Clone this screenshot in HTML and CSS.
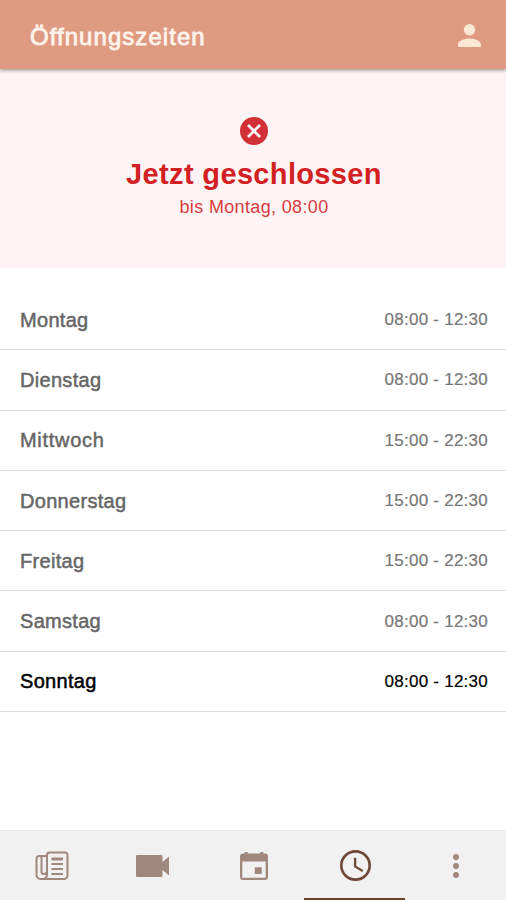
FILE: index.html
```html
<!DOCTYPE html>
<html lang="de">
<head>
<meta charset="utf-8">
<title>Öffnungszeiten</title>
<link rel="stylesheet" href="styles.css">
</head>
<body>
<header class="bar">
  <h1 class="bar-title">Öffnungszeiten</h1>
  <svg class="user" viewBox="4 4 16 16"><path d="M12 12a4 4 0 1 0 0-8 4 4 0 0 0 0 8zm0 2c-2.67 0-8 1.34-8 4v2h16v-2c0-2.66-5.33-4-8-4z"/></svg>
</header>
<section class="status">
  <svg class="status-icon" viewBox="2 2 20 20"><path d="M12 2a10 10 0 1 0 0 20 10 10 0 0 0 0-20zm5 13.59L15.59 17 12 13.41 8.41 17 7 15.59 10.59 12 7 8.41 8.41 7 12 10.59 15.59 7 17 8.41 13.41 12z"/></svg>
  <h2 class="status-title">Jetzt geschlossen</h2>
  <p class="status-text">bis Montag, 08:00</p>
</section>
<main class="hours">
  <div class="row"><span class="day">Montag</span><span class="time">08:00 - 12:30</span></div>
  <div class="row"><span class="day">Dienstag</span><span class="time">08:00 - 12:30</span></div>
  <div class="row"><span class="day wide">Mittwoch</span><span class="time">15:00 - 22:30</span></div>
  <div class="row"><span class="day">Donnerstag</span><span class="time">15:00 - 22:30</span></div>
  <div class="row"><span class="day">Freitag</span><span class="time">15:00 - 22:30</span></div>
  <div class="row"><span class="day">Samstag</span><span class="time">08:00 - 12:30</span></div>
  <div class="row today"><span class="day">Sonntag</span><span class="time">08:00 - 12:30</span></div>
</main>
<nav class="tabs">
  <a class="tab"><svg class="news" viewBox="0 0 34 30"><path class="line" d="M12 7V4a2.500 2.500 0 0 1 2.500-2.500H30A2.500 2.500 0 0 1 32.500 4v20.500a3.500 3.500 0 0 1-3.500 3.500H5.500A4 4 0 0 1 1.500 24V7.500A2.500 2.500 0 0 1 4 5h8v18.500a4.500 4.500 0 0 1-4 4.500M6.500 5.500V20a2.500 2.500 0 0 0 5 1"/><path d="M16.500 6.500h11.500v3H16.500zM16.500 12h11.500v2H16.500zM16.500 17h11.500v2H16.500zM16.500 22h11.500v2H16.500z"/></svg></a>
  <a class="tab"><svg class="video" viewBox="0 0 33 22"><path d="M1 0h24.500a1 1 0 0 1 1 1v6L33 1.500v19L26.500 15v6a1 1 0 0 1-1 1H1a1 1 0 0 1-1-1V1a1 1 0 0 1 1-1z"/></svg></a>
  <a class="tab"><svg class="calendar" viewBox="3 2 18 18.500" preserveAspectRatio="none"><path d="M17 12h-4.500v4.500H17zM16 2v1H8V2H6v1H5a2 2 0 0 0-2 2v13.500a2 2 0 0 0 2 2h14a2 2 0 0 0 2-2V5a2 2 0 0 0-2-2h-1V2zm3.500 17h-15V8.300h15z"/></svg></a>
  <a class="tab active"><svg class="clock" viewBox="2 2 20 20"><path d="M12 2a10 10 0 1 0 0 20 10 10 0 0 0 0-20zm0 18.300a8.300 8.300 0 1 1 0-16.600 8.300 8.300 0 0 1 0 16.600zm.5-13.300H11v6l5.250 3.150.75-1.230-4.500-2.670z"/></svg></a>
  <a class="tab"><svg class="more" viewBox="10 4 4 16"><path d="M12 8a2 2 0 1 0 0-4 2 2 0 0 0 0 4zm0 2a2 2 0 1 0 0 4 2 2 0 0 0 0-4zm0 6a2 2 0 1 0 0 4 2 2 0 0 0 0-4z"/></svg></a>
</nav>
</body>
</html>
```
FILE: styles.css
```css
* { box-sizing: border-box; }
body {
  margin: 0;
  height: 900px;
  display: flex;
  flex-direction: column;
  overflow: hidden;
  background: #fff;
  font-family: "Liberation Sans", Arial, sans-serif;
}
h1, h2, p { margin: 0; }
.bar {
  height: 69px;
  flex: none;
  display: flex;
  align-items: center;
  justify-content: space-between;
  padding: 4px 25px 0 30px;
  background: #df9b82;
  box-shadow: 0 1px 4px rgba(0, 0, 0, .45);
  z-index: 1;
}
.bar-title { font-size: 24px; letter-spacing: 1.050px; font-weight: 400; color: #fff4ec; -webkit-text-stroke: .8px; }
.user { width: 23px; height: 23px; margin-top: -3px; fill: #fbe8d3; }
.status {
  height: 199px;
  flex: none;
  display: flex;
  flex-direction: column;
  align-items: center;
  padding: 48px 0 0 2px;
  background: #fff4f5;
  color: #d83c42;
}
.status-icon { width: 28px; height: 28px; fill: #d03036; }
.status-title { margin-top: 13px; font-size: 29px; line-height: 32px; letter-spacing: .35px; color: #d32022; }
.status-text { margin-top: 6px; font-size: 18px; line-height: 22px; letter-spacing: .35px; }
.hours { flex: 1; padding-top: 22px; }
.row {
  height: 60.300px;
  display: flex;
  align-items: center;
  justify-content: space-between;
  padding: 1px 18px 0 20px;
  border-bottom: 1px solid #dcdcdc;
  color: #666;
}
.day { font-size: 20px; letter-spacing: .3px; -webkit-text-stroke: .5px; }
.wide { letter-spacing: .7px; }
.time { font-size: 17px; letter-spacing: .25px; color: #777; -webkit-text-stroke: .2px; }
.today, .today .time { color: #000; }
.tabs {
  height: 70px;
  flex: none;
  display: grid;
  grid-template-columns: repeat(5, 1fr);
  background: #f1f1f1;
  border-top: 1px solid #e4e4e4;
}
.tab { display: flex; align-items: center; justify-content: center; padding: 3px 0 0 2px; fill: #a1887f; border-bottom: 2px solid transparent; }
.active { padding-top: 1px; fill: #704837; border-color: #704025; }
.line { fill: none; stroke: #a1887f; stroke-width: 2; }
.news { width: 34px; height: 30px; }
.video { width: 33px; height: 22px; }
.calendar { width: 28px; height: 28px; }
.clock { width: 31px; height: 31px; }
.more { width: 6px; height: 24px; }
```
